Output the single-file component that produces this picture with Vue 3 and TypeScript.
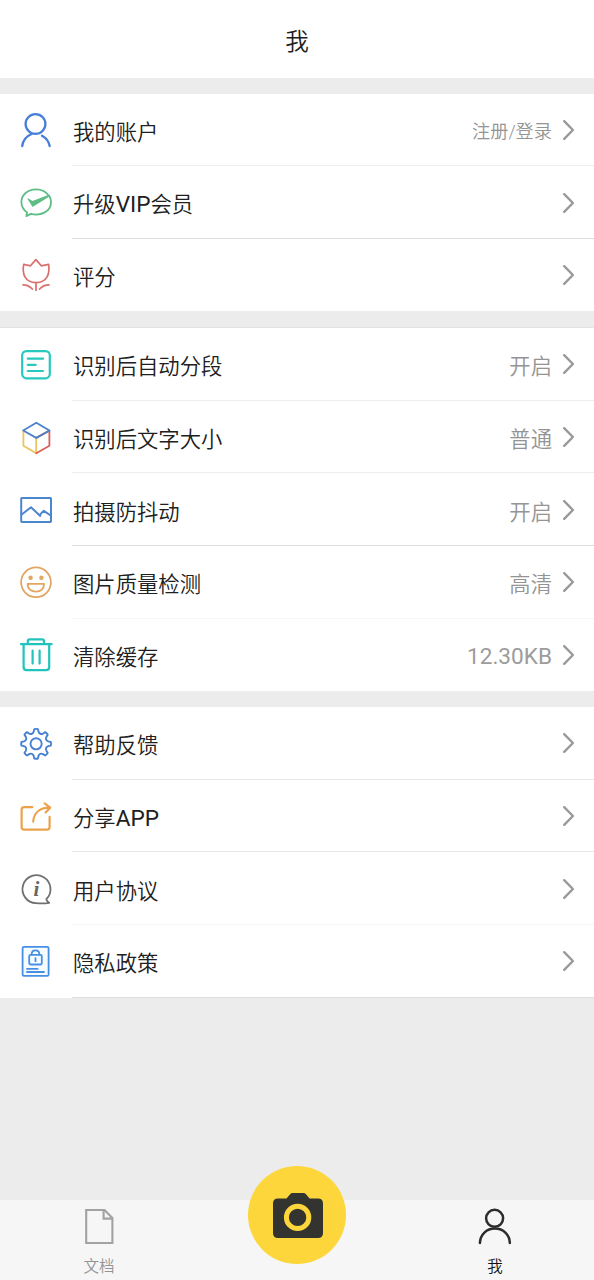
<script setup lang="ts">
type Shade = 'none' | 'faint' | 'soft' | 'mid' | 'strong'

interface Row {
  icon: string
  label: string
  value?: string
  small?: boolean
  line: Shade
}

const groups: Row[][] = [
  [
    { icon: 'user', label: '我的账户', value: '注册/登录', small: true, line: 'soft' },
    { icon: 'vip', label: '升级VIP会员', line: 'strong' },
    { icon: 'tulip', label: '评分', line: 'none' },
  ],
  [
    { icon: 'paragraph', label: '识别后自动分段', value: '开启', line: 'soft' },
    { icon: 'cube', label: '识别后文字大小', value: '普通', line: 'soft' },
    { icon: 'image', label: '拍摄防抖动', value: '开启', line: 'strong' },
    { icon: 'smile', label: '图片质量检测', value: '高清', line: 'faint' },
    { icon: 'trash', label: '清除缓存', value: '12.30KB', line: 'none' },
  ],
  [
    { icon: 'gear', label: '帮助反馈', line: 'mid' },
    { icon: 'share', label: '分享APP', line: 'mid' },
    { icon: 'info', label: '用户协议', line: 'faint' },
    { icon: 'privacy', label: '隐私政策', line: 'strong' },
  ],
]

// Splits a text into runs so that Latin runs can be set slightly larger
function runs(text: string): { text: string; latin: boolean }[] {
  return text
    .split(/([A-Z0-9.]+)/)
    .filter((t) => t !== '')
    .map((t) => ({ text: t, latin: /^[A-Z0-9.]+$/.test(t) }))
}

// Eight-toothed gear outline around (20, 20.6)
function gearPath(): string {
  const cx = 20
  const cy = 20.6
  const pt = (r: number, deg: number): string => {
    const a = ((deg - 90) * Math.PI) / 180
    return `${(cx + r * Math.cos(a)).toFixed(2)} ${(cy + r * Math.sin(a)).toFixed(2)}`
  }
  let d = `M${pt(14.8, -7)}`
  for (let i = 0; i < 8; i++) {
    const b = i * 45
    d += `Q${pt(15.2, b)} ${pt(14.8, b + 7)}`
    d += `L${pt(12.4, b + 11)}`
    d += `Q${pt(9.6, b + 22.5)} ${pt(12.4, b + 34)}`
    d += `L${pt(14.8, b + 38)}`
  }
  return d + 'Z'
}
const gear = gearPath()
</script>

<template>
  <div class="page">
    <header class="header">我</header>
    <main class="groups">
      <section v-for="(rows, g) in groups" :key="g" class="group">
        <div v-for="row in rows" :key="row.label" class="row">
          <svg class="icon" :class="row.icon" viewBox="0.4 0 40 40" width="40" height="40">
            <g v-if="row.icon === 'user'">
              <circle cx="19.9" cy="14" r="9.9" />
              <path d="M6.6 36C7.2 30.8 10.4 26.4 15.9 24M26.4 25.8C30.5 28 33.2 31.4 34.1 36" />
            </g>
            <g v-else-if="row.icon === 'vip'">
              <path d="M32.8 12.4C30.6 8.7 26 6.3 20.5 6.3C12.1 6.3 5.8 11.8 5.8 19C5.8 23.4 7.8 27 11.4 29.2L10.8 33.1L15.2 30.9C25.5 33.4 35.4 28.2 35.4 19.2C35.4 17.2 35 15.4 34.2 13.8" />
              <path class="solid" d="M11.6 15.6L12.8 15.4L16.9 18L34 11.6L34.6 13L17 24Z" />
            </g>
            <g v-else-if="row.icon === 'tulip'">
              <path d="M8.1 9.4L14.9 10.8L20.3 4.6L25.7 10.8L33 9.4C34.4 18.5 31.7 27.6 20.5 27.7C9 27.5 6.4 18.5 8.1 9.4ZM20.4 27.7V35.3M7.4 29.8C11.5 29.8 14 31 16.7 34M33.4 29.8C29.4 29.8 26.6 31 24 34" />
            </g>
            <g v-else-if="row.icon === 'paragraph'">
              <rect x="6.6" y="7.1" width="27.6" height="27.2" rx="4.2" />
              <path d="M12.2 14.7H27.4M12.2 20.8H20.1M12.2 27H27.4" />
            </g>
            <g v-else-if="row.icon === 'cube'">
              <path class="yellow" d="M7.8 13.6V28.8L20.6 36.2V20.8" />
              <path class="red" d="M20.7 36.2L33.8 28.8V13.6L20.7 20.9" />
              <path class="blue" d="M7.6 13.5L20.7 5.7L33.9 13.5L20.7 20.9Z" />
            </g>
            <g v-else-if="row.icon === 'image'">
              <rect x="5.6" y="8.1" width="29.8" height="23.8" rx="0.6" />
              <path d="M5.8 24.7L15.4 17.3L24.7 25.9M23.9 25.1L28.2 20.8L35.1 25.5" />
            </g>
            <g v-else-if="row.icon === 'smile'">
              <circle cx="20.4" cy="20.3" r="14.9" />
              <circle class="solid" cx="15" cy="15.7" r="2.2" />
              <circle class="solid" cx="25.8" cy="15.7" r="2.2" />
              <path d="M12 21.9H28.5C28.3 26.6 25.3 29.6 20.3 29.6C15.3 29.6 12.3 26.6 12 21.9Z" />
            </g>
            <g v-else-if="row.icon === 'trash'">
              <path d="M5.4 9.2H36M12.2 9V6.2Q12.2 4.3 14.1 4.3H26.5Q28.4 4.3 28.4 6.2V9M8 9.2V32Q8 35.2 11.2 35.2H30.4Q33.6 35.2 33.6 32V9.2M17 15.6V28.6M24 15.6V28.6" />
            </g>
            <g v-else-if="row.icon === 'gear'">
              <path :d="gear" transform="translate(0.5 0.2)" />
              <circle cx="20.5" cy="20.8" r="5.6" />
            </g>
            <g v-else-if="row.icon === 'share'">
              <path d="M16.7 11.2H8.6Q6 11.2 6 13.8V31Q6 33.6 8.6 33.6H31.4Q34 33.6 34 31V20.8M17.6 25.6C18.2 17.1 24 11.8 33.8 11.7M29 7.4L34.6 11.7L30 16.4" />
            </g>
            <g v-else-if="row.icon === 'info'">
              <path d="M30.7 30.2A14 14 0 1 0 20.4 34.2C25 34.6 29.5 34.5 33.6 33.8C32.2 33 31.1 31.8 30.7 30.2Z" />
              <text x="20.8" y="27.4" text-anchor="middle">i</text>
            </g>
            <g v-else-if="row.icon === 'privacy'">
              <rect class="pale" x="7" y="5.9" width="26" height="28.9" rx="1.4" />
              <rect x="13.6" y="13.8" width="12.6" height="9.7" rx="1.4" />
              <path d="M16.1 13.6V12.7Q16.2 9.3 19.9 9.3Q23.6 9.3 23.7 12.7V13.6M19.9 17.1V20.2M11.4 27.9H22M11.4 31H28.4" />
            </g>
          </svg>
          <span class="label"><span v-for="(r, i) in runs(row.label)" :key="i" :class="{ latin: r.latin }">{{ r.text }}</span></span>
          <span v-if="row.value" class="value" :class="{ small: row.small }"><span v-for="(r, i) in runs(row.value)" :key="i" :class="{ latin: r.latin }">{{ r.text }}</span></span>
          <svg class="chevron" viewBox="0 0 14 22" width="14" height="22">
            <path d="M2.2 2.2L10.9 11L2.2 19.8" />
          </svg>
          <i class="line" :class="row.line"></i>
        </div>
      </section>
    </main>
    <nav class="tabs">
      <div class="tab">
        <svg viewBox="0 0 40 40" width="40" height="40" class="doc">
          <path d="M7.2 4H25.5L33.4 12V37H7.2ZM24.6 4.2V12.6H33.2" />
        </svg>
        <span>文档</span>
      </div>
      <div class="shutter">
        <svg viewBox="0 0 52 48" width="52" height="48">
          <path class="body" d="M6 7.4H14.5L18.1 3.2Q19.1 2 20.7 2H31.4Q33 2 34 3.2L37.6 7.4H46Q51 7.4 51 12.4V42Q51 47 46 47H6Q1 47 1 42V12.4Q1 7.4 6 7.4Z" />
          <circle class="ring" cx="25.6" cy="26.4" r="11.2" />
        </svg>
      </div>
      <div class="tab active">
        <svg viewBox="0 0 40 40" width="40" height="40" class="me">
          <circle cx="19.6" cy="12.3" r="8.5" />
          <path d="M4.9 37C5.3 28.3 11.5 22.6 19.9 22.6C28.3 22.6 34.5 28.3 34.9 37" />
        </svg>
        <span>我</span>
      </div>
    </nav>
  </div>
</template>

<style>
body {
  margin: 0;
  background: #ececec;
}
</style>

<style scoped>
.page {
  display: flex;
  flex-direction: column;
  width: 594px;
  height: 1280px;
  overflow: hidden;
  background: #ececec;
  color: #202020;
  font-family: Roboto, "Noto Sans CJK SC", sans-serif;
  font-weight: 350;
}
.header {
  box-sizing: border-box;
  height: 78px;
  padding-top: 4px;
  flex: none;
  background: #fff;
  font-size: 23.5px;
  line-height: 76px;
  text-align: center;
}
.groups {
  display: flex;
  flex: 1;
  flex-direction: column;
  gap: 16px;
  padding-top: 16px;
}
.group {
  background: #fff;
}
.group:nth-child(2) {
  border-top: 1px solid #e3e3e3;
}
.row {
  position: relative;
  box-sizing: border-box;
  display: flex;
  align-items: center;
  height: 72.6px;
  padding: 0 18px 0 16px;
}
.group:first-child .row {
  height: 72.4px;
}
.icon {
  flex: none;
  fill: none;
  stroke-width: 1.9;
  stroke-linecap: round;
  stroke-linejoin: round;
}
.label {
  flex: 1;
  padding: 5.8px 0 0 17px;
  font-size: 21.33px;
  line-height: 32px;
  white-space: nowrap;
}
.value {
  padding-top: 5.8px;
  margin-right: 10px;
  color: #949494;
  font-size: 21.33px;
  line-height: 32px;
}
.value.small {
  padding-top: 4px;
  font-size: 18.2px;
}
.latin {
  font-family: Roboto, sans-serif;
  font-size: 22.6px;
  font-weight: 400;
  line-height: 1;
}
.value .latin {
  position: relative;
  top: -1px;
  color: #9c9c9c;
}
.chevron {
  flex: none;
  fill: none;
  stroke: #999;
  stroke-width: 2.4;
  stroke-linecap: round;
  stroke-linejoin: round;
}
.line {
  position: absolute;
  right: 0;
  bottom: 0;
  left: 72px;
  height: 1px;
}
.faint { background: #f6f6f6; }
.soft { background: #eeeeee; }
.mid { background: #e7e7e7; }
.strong { background: #dddddd; }

.user { stroke: #477fd8; stroke-width: 2.3; }
.vip { stroke: #5cbd85; stroke-width: 1.8; }
.vip .solid { fill: #5cbd85; stroke: none; }
.tulip { stroke: #d9706c; stroke-width: 1.7; }
.paragraph { stroke: #27c8bd; stroke-width: 2.2; }
.cube { stroke-width: 1.8; }
.cube .yellow { stroke: #edc35b; }
.cube .red { stroke: #d9605f; }
.cube .blue { stroke: #4b82cc; }
.image { stroke: #4b86cf; stroke-width: 2; }
.smile { stroke: #e3a562; stroke-width: 1.8; }
.smile .solid { fill: #e3a562; stroke: none; }
.trash { stroke: #20c4bc; stroke-width: 2.2; }
.gear { stroke: #4781d3; stroke-width: 1.9; }
.share { stroke: #eca24c; stroke-width: 2.2; }
.info { stroke: #707070; stroke-width: 1.8; }
.info text {
  fill: #666;
  stroke: none;
  font: italic bold 21px "Liberation Serif", serif;
}
.privacy { stroke: #4590e3; stroke-width: 1.8; }
.privacy .pale { fill: #f6fcff; }

.tabs {
  display: flex;
  flex: none;
  height: 80px;
  background: #f6f6f6;
}
.tab {
  display: flex;
  flex: 1;
  flex-direction: column;
  align-items: center;
  padding-top: 6px;
  color: #949494;
  font-size: 15.5px;
  line-height: 20px;
}
.tab svg {
  flex: none;
  margin-bottom: 11px;
  fill: none;
}
.tab.active {
  color: #111;
}
.doc {
  stroke: #a2a2a2;
  stroke-width: 2.1;
}
.me {
  stroke: #2c2c2c;
  stroke-width: 2.5;
  stroke-linecap: round;
}
.shutter {
  display: flex;
  align-items: center;
  justify-content: center;
  box-sizing: border-box;
  width: 98px;
  height: 98px;
  margin: -34px 50px 0;
  padding: 0 0 0 2px;
  border-radius: 50%;
  background: #fcd63b;
}
.body { fill: #333330; }
.ring {
  fill: none;
  stroke: #fcd63b;
  stroke-width: 5;
}
</style>
